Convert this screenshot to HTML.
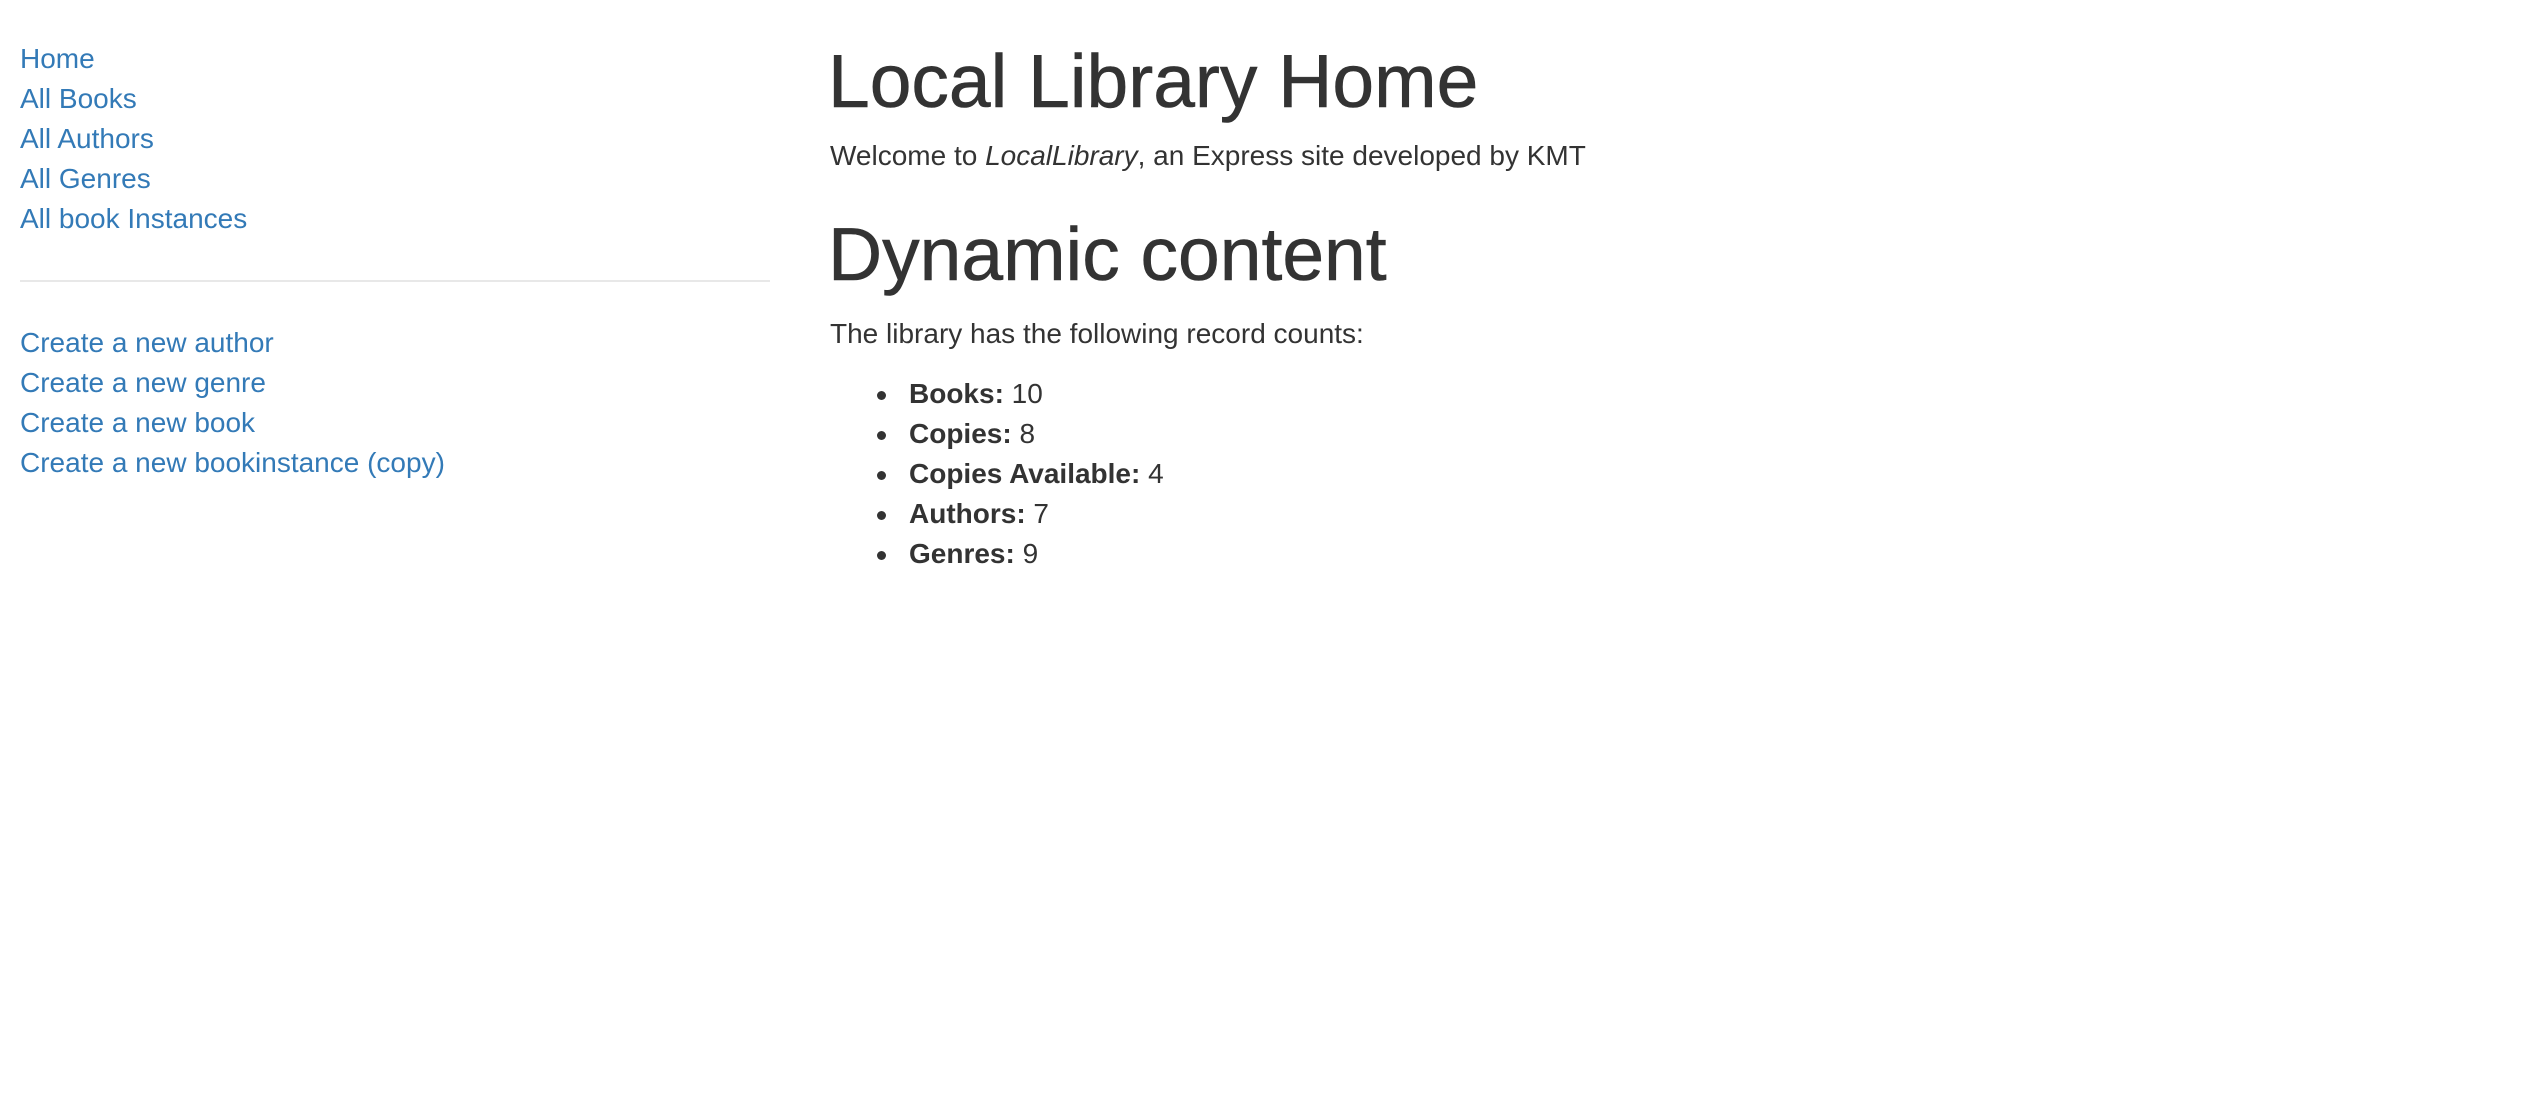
<!DOCTYPE html>
<html><head><meta charset="utf-8"><style>
html,body{margin:0;padding:0;background:#fff;width:2530px;height:1108px;overflow:hidden}
body{font-family:"Liberation Sans",Arial,sans-serif;color:#333;font-size:28px}
.l{position:absolute;line-height:40px;white-space:nowrap}
a{color:#337ab7;text-decoration:none}
.h{position:absolute;font-size:75px;line-height:74px;font-weight:normal;margin:0;white-space:nowrap;color:#333;-webkit-text-stroke:0.6px #333}
.hr{position:absolute;left:20px;top:280px;width:750px;height:2px;background:#e8e8e8}
.b{position:absolute;width:9px;height:9px;border-radius:50%;background:#333}
</style></head><body>
<div class="l" style="left:20px;top:39px"><a>Home</a></div>
<div class="l" style="left:20px;top:79px"><a>All Books</a></div>
<div class="l" style="left:20px;top:119px"><a>All Authors</a></div>
<div class="l" style="left:20px;top:159px"><a>All Genres</a></div>
<div class="l" style="left:20px;top:199px"><a>All book Instances</a></div>
<div class="hr"></div>
<div class="l" style="left:20px;top:323px"><a>Create a new author</a></div>
<div class="l" style="left:20px;top:363px"><a>Create a new genre</a></div>
<div class="l" style="left:20px;top:403px"><a>Create a new book</a></div>
<div class="l" style="left:20px;top:443px"><a>Create a new bookinstance (copy)</a></div>

<h1 class="h" style="left:828px;top:44px">Local Library Home</h1>
<div class="l" style="left:830px;top:136px">Welcome to <em>LocalLibrary</em>, an Express site developed by KMT</div>
<h1 class="h" style="left:828px;top:217px">Dynamic content</h1>
<div class="l" style="left:830px;top:314px">The library has the following record counts:</div>

<div class="b" style="left:877px;top:391px"></div>
<div class="l" style="left:909px;top:374px"><b>Books:</b> 10</div>
<div class="b" style="left:877px;top:431px"></div>
<div class="l" style="left:909px;top:414px"><b>Copies:</b> 8</div>
<div class="b" style="left:877px;top:471px"></div>
<div class="l" style="left:909px;top:454px"><b>Copies Available:</b> 4</div>
<div class="b" style="left:877px;top:511px"></div>
<div class="l" style="left:909px;top:494px"><b>Authors:</b> 7</div>
<div class="b" style="left:877px;top:551px"></div>
<div class="l" style="left:909px;top:534px"><b>Genres:</b> 9</div>
</body></html>
